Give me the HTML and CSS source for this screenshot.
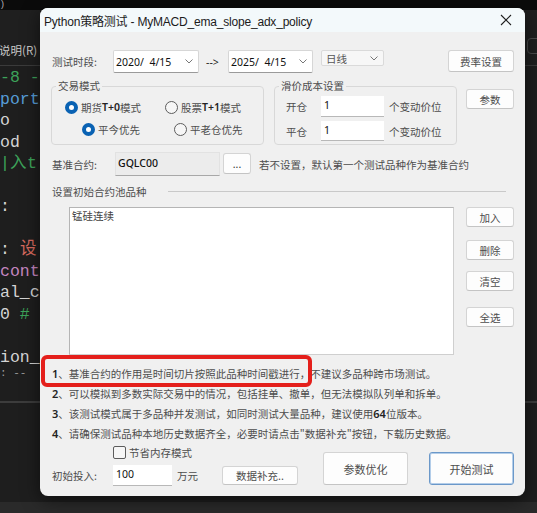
FILE: index.html
```html
<!DOCTYPE html>
<html lang="zh-CN">
  <head>
    <meta charset="UTF-8" />
    <meta name="viewport" content="width=device-width, initial-scale=1.0" />
    <title>Python策略测试</title>
    <link rel="stylesheet" href="styles.css">
  </head>
  <body>
    <div class="desktop">
      <!-- editor in the background -->
      <div class="editor">
        <div class="top-strip">)</div>
        <div class="menubar">
          <span class="menu-item">说明(R)</span>
          <span class="search-box"></span>
        </div>
        <div class="code">
          <div class="ln green">-8 -</div>
          <div class="ln blue">port</div>
          <div class="ln">o</div>
          <div class="ln">od</div>
          <div class="ln green">|入t</div>
          <div class="ln"></div>
          <div class="ln">:</div>
          <div class="ln"></div>
          <div class="ln">: <span class="red">设</span></div>
          <div class="ln purple">cont</div>
          <div class="ln">al_c</div>
          <div class="ln">0 <span class="green">#</span></div>
          <div class="ln"></div>
          <div class="ln">ion_</div>
          <div class="ln small">: --</div>
        </div>
        <div class="panel"></div>
        <div class="status"></div>
      </div>

      <!-- dialog window -->
      <div class="dialog">
        <div class="titlebar">
          <span class="title">Python策略测试 - MyMACD_ema_slope_adx_policy</span>
          <svg class="close" width="12" height="12" viewBox="0 0 12 12">
            <path d="M1 1 L11 11 M11 1 L1 11" stroke="#222" stroke-width="1.1" fill="none" />
          </svg>
        </div>

        <div class="dlg-body">
          <div class="row row-period">
            <span class="label w61">测试时段:</span>
            <div class="datebox">
              <span class="val">2020/&nbsp; 4/15</span>
              <svg class="chev" width="8" height="5" viewBox="0 0 8 5"><polyline points="0.5,0.5 4,4 7.5,0.5" fill="none" stroke="#777" /></svg>
            </div>
            <span class="arrow">--&gt;</span>
            <div class="datebox">
              <span class="val">2025/&nbsp; 4/15</span>
              <svg class="chev" width="8" height="5" viewBox="0 0 8 5"><polyline points="0.5,0.5 4,4 7.5,0.5" fill="none" stroke="#777" /></svg>
            </div>
            <div class="combo">
              <span class="txt">日线</span>
              <svg class="chev" width="8" height="5" viewBox="0 0 8 5"><polyline points="0.5,0.5 4,4 7.5,0.5" fill="none" stroke="#777" /></svg>
            </div>
            <button class="btn btn-fee">费率设置</button>
          </div>

          <div class="row row-groups">
            <fieldset class="group group-mode">
              <legend>交易模式</legend>
              <div class="opt-row first">
                <label class="opt w100"><span class="radio on"></span>期货<span class="lat">T+0</span>模式</label>
                <label class="opt"><span class="radio"></span>股票<span class="lat">T+1</span>模式</label>
              </div>
              <div class="opt-row second">
                <label class="opt w92"><span class="radio on"></span>平今优先</label>
                <label class="opt"><span class="radio"></span>平老仓优先</label>
              </div>
            </fieldset>

            <fieldset class="group group-slip">
              <legend>滑价成本设置</legend>
              <div class="slip-row first">
                <span class="label w35">开仓</span>
                <span class="input in-slip">1</span>
                <span class="label unit">个变动价位</span>
              </div>
              <div class="slip-row second">
                <span class="label w35">平仓</span>
                <span class="input in-slip">1</span>
                <span class="label unit">个变动价位</span>
              </div>
            </fieldset>

            <button class="btn btn-param">参数</button>
          </div>

          <div class="row row-base">
            <span class="label w63">基准合约:</span>
            <span class="readonly">GQLC00</span>
            <button class="btn btn-dots">...</button>
            <span class="label hint">若不设置，默认第一个测试品种作为基准合约</span>
          </div>

          <div class="row row-pool">
            <span class="label">设置初始合约池品种</span>
            <span class="rule"></span>
          </div>

          <div class="row row-list">
            <div class="listbox">
              <div class="item">锰硅连续</div>
            </div>
            <div class="side-btns">
              <button class="btn btn-side">加入</button>
              <button class="btn btn-side b2">删除</button>
              <button class="btn btn-side b3">清空</button>
              <button class="btn btn-side b4">全选</button>
            </div>
          </div>

          <div class="notes">
            <p><span class="num">1</span>、基准合约的作用是时间切片按照此品种时间戳进行，不建议多品种跨市场测试。</p>
            <p><span class="num">2</span>、可以模拟到多数实际交易中的情况，包括挂单、撤单，但无法模拟队列单和拆单。</p>
            <p><span class="num">3</span>、该测试模式属于多品种并发测试，如同时测试大量品种，建议使用<span class="num">64</span>位版本。</p>
            <p><span class="num">4</span>、请确保测试品种本地历史数据齐全，必要时请点击"数据补充"按钮，下载历史数据。</p>
          </div>

          <div class="row row-bottom">
            <div class="bottom-left">
              <label class="check-row"><span class="checkbox"></span>节省内存模式</label>
              <div class="invest-row">
                <span class="label w61">初始投入:</span>
                <span class="input in-invest">100</span>
                <span class="label unit">万元</span>
                <button class="btn btn-data">数据补充..</button>
              </div>
            </div>
            <button class="btn btn-big btn-opt">参数优化</button>
            <button class="btn btn-big btn-start">开始测试</button>
          </div>
        </div>
      </div>

      <div class="highlight"></div>
    </div>
  </body>
</html>
```

FILE: styles.css
```css
/* page / desktop */
body {
  margin: 0;
  padding: 0;
  background-color: #1e1e1e;
  font-family: "Noto Sans CJK SC", sans-serif;
}

.desktop {
  position: relative;
  width: 537px;
  height: 513px;
  overflow: hidden;
}

/* editor behind the dialog */
.editor {
  display: flex;
  flex-direction: column;
  height: 513px;
}

.top-strip {
  height: 10px;
  background: #0b0b0b;
  color: #bbb;
  font-family: "Liberation Sans", sans-serif;
  font-size: 9px;
  line-height: 9px;
  padding-left: 1px;
}

.menubar {
  display: flex;
  height: 55px;
  background: #1f1f1f;
  border-bottom: 1px solid #3b3b3b;
}
.menu-item {
  margin-top: 33px;
  margin-left: -1px;
  color: #c8c8c8;
  font-size: 11.5px;
  line-height: 14px;
  height: 14px;
}
.search-box {
  margin-left: auto;
  margin-right: -6px;
  margin-top: 28px;
  width: 14px;
  height: 14px;
  border: 1px solid #4a4a4a;
  border-radius: 4px;
}

.code {
  height: 334px;
  padding-top: 1px;
  overflow: hidden;
  font-family: "Liberation Mono", monospace;
  font-size: 16.5px;
  color: #d4d4d4;
  background: #1e1e1e;
}
.code .ln {
  height: 21.5px;
  line-height: 21.5px;
  white-space: pre;
}
.code .ln.small {
  font-size: 11px;
  line-height: 10px;
  height: 10px;
  color: #9a9a9a;
}
.green { color: #3da35a; }
.blue { color: #569cd6; }
.red { color: #d86a5e; }
.purple { color: #c586c0; }

.panel {
  height: 99px;
  border-top: 2px solid #3c3c3c;
  background: #1e1e1e;
}
.status {
  flex: 1;
  background: #2a2a2a;
}

/* dialog */
.dialog {
  position: absolute;
  left: 40px;
  top: 8px;
  width: 485px;
  height: 488px;
  background: #f0f0f0;
  border-radius: 8px;
  overflow: hidden;
  box-shadow: 0 4px 18px rgba(0, 0, 0, 0.55);
}

.titlebar {
  display: flex;
  align-items: center;
  height: 24px;
  padding-left: 4px;
  background: #f3f9fb;
}
.title {
  font-family: "Liberation Sans", "Noto Sans CJK SC", sans-serif;
  font-size: 12px;
  letter-spacing: -0.2px;
  color: #1b1b1b;
  white-space: nowrap;
}
.close {
  margin-left: auto;
  margin-right: 13px;
}

.dlg-body {
  padding: 18px 11px 0 12px;
}

.row {
  display: flex;
  align-items: center;
}

.label {
  font-size: 10.5px;
  color: #4d4d4d;
  white-space: nowrap;
}
.w61 { width: 61px; }
.w63 { width: 63px; }
.w35 { width: 35px; }

.lat,
.num {
  font-family: "Noto Sans", sans-serif;
  color: #222;
}
.lat {
  font-size: 10.5px;
  font-weight: 600;
}

/* first row */
.row-period {
  height: 23px;
}
.datebox {
  display: flex;
  align-items: center;
  width: 86px;
  height: 23px;
  box-sizing: border-box;
  background: #fff;
  border: 1px solid #d6d6d6;
  border-bottom-color: #9a9a9a;
  border-radius: 2px;
  padding: 0 5px 0 2px;
}
.datebox + .arrow + .datebox {
  width: 85px;
}
.val {
  font-family: "Noto Sans", sans-serif;
  font-size: 10.5px;
  color: #111;
  white-space: nowrap;
}
.chev {
  margin-left: auto;
}
.arrow {
  width: 22px;
  margin-left: 7px;
  font-family: "Noto Sans", sans-serif;
  font-size: 10.5px;
  color: #222;
}
.combo {
  display: flex;
  align-items: center;
  align-self: flex-start;
  margin-left: 8px;
  width: 63px;
  height: 16px;
  box-sizing: border-box;
  padding: 0 5px 0 4px;
  background: #f7f7f7;
  border: 1px solid #dadada;
  border-radius: 2px;
}
.combo .txt {
  font-size: 10.5px;
  color: #555;
}

.btn {
  box-sizing: border-box;
  padding: 0;
  background: #fdfdfd;
  border: 1px solid #d4d4d4;
  border-bottom-color: #c4c4c4;
  border-radius: 3px;
  font-family: "Noto Sans CJK SC", sans-serif;
  font-size: 10.5px;
  color: #4d4d4d;
}
.btn-fee {
  align-self: flex-start;
  margin-left: auto;
  width: 66px;
  height: 22px;
}

/* group boxes */
.row-groups {
  align-items: flex-start;
  margin-top: 7px;
}
.group {
  margin: 0;
  padding: 0;
  box-sizing: border-box;
  border: 1px solid #d8d8d8;
  border-radius: 4px;
  min-width: 0;
}
.group legend {
  margin-left: 4px;
  padding: 0 2px;
  font-size: 10.5px;
  line-height: 12px;
  color: #4d4d4d;
}
.group-mode {
  margin-left: -1px;
  width: 213px;
  height: 65px;
}
.opt-row {
  display: flex;
  align-items: center;
  height: 14px;
}
.opt-row.first {
  margin-top: 8px;
  padding-left: 13px;
}
.opt-row.second {
  margin-top: 8px;
  padding-left: 30px;
}
.opt {
  display: flex;
  align-items: center;
  font-size: 10.5px;
  color: #4d4d4d;
  white-space: nowrap;
}
.w100 { width: 100px; }
.w92 { width: 92px; }

.radio {
  width: 13px;
  height: 13px;
  box-sizing: border-box;
  border: 1px solid #5c5c5c;
  border-radius: 50%;
  background: #f6f6f6;
  margin-right: 3px;
}
.radio.on {
  border: 4px solid #0a62b3;
  background: #fff;
}

.group-slip {
  margin-left: 10px;
  width: 183px;
  height: 65px;
}
.slip-row {
  display: flex;
  align-items: center;
  padding-left: 11px;
}
.slip-row.first {
  margin-top: 4px;
}
.slip-row.second {
  margin-top: 4px;
}
.input {
  box-sizing: border-box;
  background: #fff;
  font-family: "Noto Sans", sans-serif;
  font-size: 10.5px;
  color: #111;
  padding-left: 3px;
  border-bottom: 1px solid #b8b8b8;
}
.in-slip {
  width: 63px;
  height: 21px;
  line-height: 19px;
}
.slip-row.second .in-slip {
  height: 20px;
}
.unit {
  margin-left: 5px;
}

.btn-param {
  margin-left: 9px;
  margin-top: 9px;
  width: 48px;
  height: 20px;
}

/* base contract */
.row-base {
  margin-top: 7px;
  height: 24px;
}
.readonly {
  box-sizing: border-box;
  width: 105px;
  height: 24px;
  line-height: 20px;
  padding-left: 2px;
  background: #ececec;
  border: 1px solid #e2e2e2;
  border-bottom-color: #a8a8a8;
  font-family: "Noto Sans", sans-serif;
  font-size: 10.5px;
  font-weight: 500;
  color: #111;
}
.btn-dots {
  align-self: flex-start;
  margin-left: 3px;
  margin-top: 1px;
  width: 28px;
  height: 21px;
  font-family: "Noto Sans", sans-serif;
  color: #333;
}
.hint {
  margin-left: 8px;
}

/* pool */
.row-pool {
  margin-top: 8px;
  height: 14px;
}
.rule {
  flex: 1;
  margin-left: 21px;
  margin-right: 8px;
  border-top: 1px solid #c9c9c9;
}

.row-list {
  align-items: flex-start;
  margin-top: 9px;
}
.listbox {
  margin-left: 17px;
  width: 385px;
  height: 148px;
  box-sizing: border-box;
  background: #fff;
  border: 1px solid #cfcfcf;
  border-top-color: #b5b5b5;
  border-left-color: #b5b5b5;
}
.listbox .item {
  padding: 1px 2px;
  font-size: 10.5px;
  line-height: 14px;
  color: #444;
}
.side-btns {
  display: flex;
  flex-direction: column;
  margin-left: auto;
}
.btn-side {
  width: 48px;
  height: 20px;
}
.btn-side.b2 { margin-top: 13px; }
.btn-side.b3 { margin-top: 11px; }
.btn-side.b4 { margin-top: 16px; }

/* notes */
.notes {
  margin-top: 9px;
}
.notes p {
  margin: 0;
  height: 20px;
  line-height: 20px;
  font-size: 10.5px;
  color: #4d4d4d;
  white-space: nowrap;
}
.notes .num {
  font-size: 11px;
  font-weight: 600;
}

/* bottom */
.row-bottom {
  align-items: flex-start;
}
.bottom-left {
  width: 246px;
}
.check-row {
  display: flex;
  align-items: center;
  height: 14px;
  margin-top: 1px;
  padding-left: 61px;
  font-size: 10.5px;
  color: #4d4d4d;
}
.checkbox {
  width: 13px;
  height: 13px;
  box-sizing: border-box;
  border: 1px solid #5c5c5c;
  border-radius: 2px;
  background: #f6f6f6;
  margin-right: 3px;
}
.invest-row {
  display: flex;
  align-items: center;
  margin-top: 6px;
  height: 21px;
}
.in-invest {
  width: 59px;
  height: 21px;
  line-height: 18px;
}
.btn-data {
  margin-left: auto;
  width: 76px;
  height: 19px;
}
.btn-big {
  margin-top: 8px;
  width: 85px;
  height: 33px;
  font-size: 11px;
}
.btn-opt {
  margin-left: 25px;
}
.btn-start {
  margin-left: 21px;
  border: 1px solid #6b98c9;
  box-shadow: inset 0 0 0 1px #b3cde9;
}

/* red annotation box over note 1 */
.highlight {
  position: absolute;
  left: 41px;
  top: 355px;
  width: 271px;
  height: 32px;
  box-sizing: border-box;
  border: 4px solid #e41f1b;
  border-radius: 6px;
}
```
